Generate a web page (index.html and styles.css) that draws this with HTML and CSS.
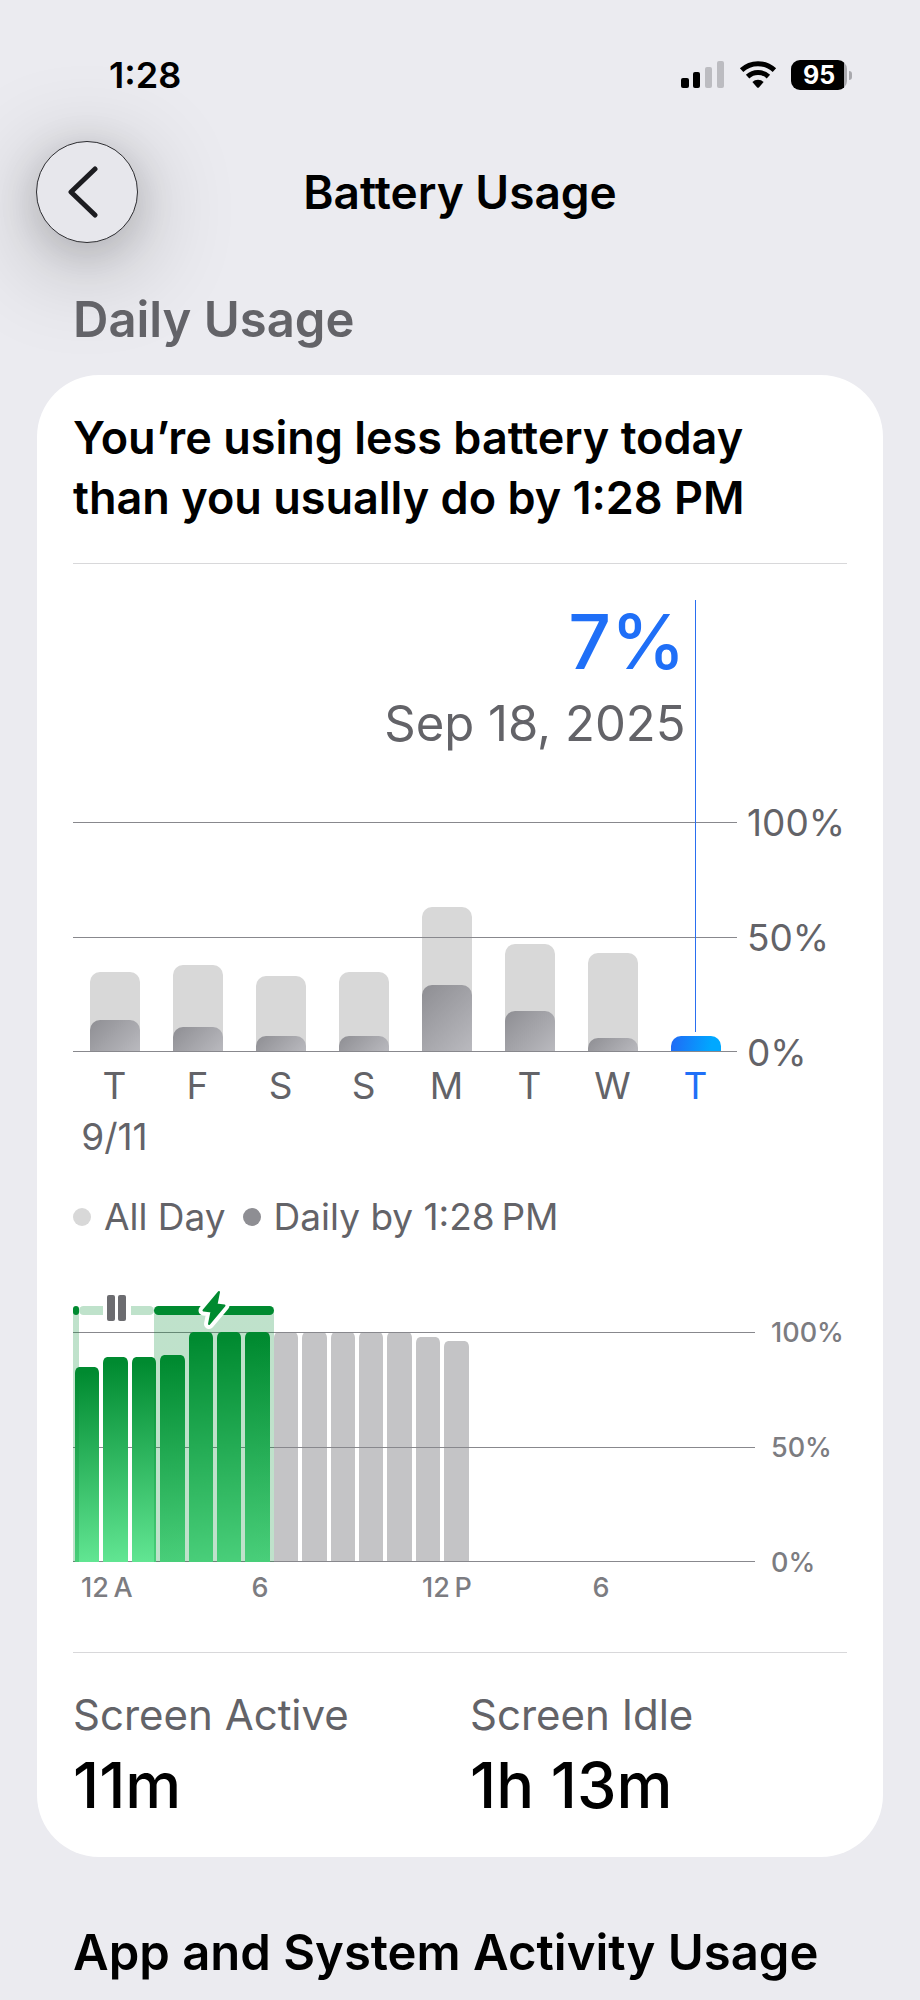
FILE: index.html
```html
<!DOCTYPE html>
<html lang="en">
<head>
  <meta charset="UTF-8">
  <meta name="viewport" content="width=device-width, initial-scale=1">
  <title>Battery Usage</title>
  <link rel="stylesheet" href="styles.css">
</head>
<body>
  <div class="status-bar">
    <span class="time">1:28</span>
    <div class="status-icons">
      <svg class="signal" width="44" height="28" viewBox="0 0 44 28">
        <rect x="0" y="17" width="8" height="10" rx="2"/>
        <rect x="12" y="11" width="7" height="16" rx="2"/>
        <rect x="24" y="6" width="7" height="21" rx="2" fill="#bcbcc1"/>
        <rect x="36" y="0" width="7" height="27" rx="2" fill="#bcbcc1"/>
      </svg>
      <svg class="wifi" width="38" height="28" viewBox="0 0 38 28">
        <path d="M2.6 9.2 A24 24 0 0 1 35.4 9.2" fill="none" stroke="#000" stroke-width="5"/>
        <path d="M8.6 15.6 A15.2 15.2 0 0 1 29.4 15.6" fill="none" stroke="#000" stroke-width="5"/>
        <path d="M13.4 21 A8 8 0 0 1 24.6 21 L19.9 26.4 Q19 27.3 18.1 26.4 Z"/>
      </svg>
      <div class="battery"><span class="battery-level">95</span><span class="battery-tip"></span></div>
    </div>
  </div>

  <header class="nav">
    <button class="back" type="button" aria-label="Back">
      <svg width="30" height="52" viewBox="0 0 30 52">
        <path d="M27 3 L3 26 L27 49" fill="none" stroke="#1c1c20" stroke-width="5" stroke-linecap="round" stroke-linejoin="round"/>
      </svg>
    </button>
    <h1>Battery Usage</h1>
  </header>

  <main>
    <h2 class="section-title muted">Daily Usage</h2>

    <section class="card">
      <p class="summary">You’re using less battery today<br>than you usually do by 1:28 PM</p>

      <!-- last 8 days -->
      <div class="chart daily">
        <div class="plot">
          <div class="bars">
            <div class="day"><div class="bar" style="height:35%"></div><div class="bar part" style="height:14%"></div></div>
            <div class="day"><div class="bar" style="height:38%"></div><div class="bar part" style="height:11%"></div></div>
            <div class="day"><div class="bar" style="height:33%"></div><div class="bar part" style="height:7%"></div></div>
            <div class="day"><div class="bar" style="height:35%"></div><div class="bar part" style="height:7%"></div></div>
            <div class="day"><div class="bar" style="height:63%"></div><div class="bar part" style="height:29%"></div></div>
            <div class="day"><div class="bar" style="height:47%"></div><div class="bar part" style="height:18%"></div></div>
            <div class="day"><div class="bar" style="height:43%"></div><div class="bar part" style="height:6%"></div></div>
            <div class="day"><div class="bar today" style="height:7%"></div></div>
          </div>
          <div class="lines"><i></i><i></i><i></i></div>
          <div class="callout">
            <div class="callout-value">7%</div>
            <div class="callout-date">Sep 18, 2025</div>
          </div>
        </div>
        <div class="axis"><span>100%</span><span>50%</span><span>0%</span></div>
        <div class="days">
          <span>T<br>9/11</span><span>F</span><span>S</span><span>S</span><span>M</span><span>T</span><span>W</span><span class="selected">T</span>
        </div>
      </div>

      <div class="legend">
        <span class="dot"></span><span>All Day</span>
        <span class="dot dark"></span><span>Daily by 1:28&#8201;PM</span>
      </div>

      <!-- battery level by hour -->
      <div class="chart hourly">
        <div class="plot">
          <div class="bars">
            <div class="hour charged" style="height:85%"></div>
            <div class="hour charged" style="height:89%"></div>
            <div class="hour charged" style="height:89%"></div>
            <div class="hour charged" style="height:90%"></div>
            <div class="hour charged" style="height:100%"></div>
            <div class="hour charged" style="height:100%"></div>
            <div class="hour charged" style="height:100%"></div>
            <div class="hour" style="height:100%"></div>
            <div class="hour" style="height:100%"></div>
            <div class="hour" style="height:100%"></div>
            <div class="hour" style="height:100%"></div>
            <div class="hour" style="height:100%"></div>
            <div class="hour" style="height:98%"></div>
            <div class="hour" style="height:96%"></div>
          </div>
          <div class="lines"><i></i><i></i><i></i></div>
          <div class="charging">
            <div class="zone on" style="width:0.9%"><div class="strip"></div></div>
            <div class="zone" style="width:11%">
              <div class="strip">
                <svg class="pause" width="28" height="32" viewBox="0 0 28 32">
                  <rect width="28" height="26" fill="#fff"/>
                  <rect x="4" y="0" width="8" height="26" rx="2" fill="#6c6c70"/>
                  <rect x="15" y="0" width="8" height="26" rx="2" fill="#6c6c70"/>
                </svg>
              </div>
            </div>
            <div class="zone on" style="width:17.6%">
              <div class="strip">
                <svg class="bolt" width="36" height="52" viewBox="0 0 36 52">
                  <path d="M23 7 L7.5 25.5 L15.5 26.5 L13 39 L28.5 20.5 L20.5 19.5 Z" fill="#fff" stroke="#fff" stroke-width="10" stroke-linejoin="round"/>
                  <path d="M23 7 L7.5 25.5 L15.5 26.5 L13 39 L28.5 20.5 L20.5 19.5 Z" fill="#008a30" stroke="#008a30" stroke-width="2" stroke-linejoin="round"/>
                </svg>
              </div>
            </div>
          </div>
        </div>
        <div class="axis"><span>100%</span><span>50%</span><span>0%</span></div>
        <div class="times"><span>12&#8201;A</span><span>6</span><span>12&#8201;P</span><span>6</span></div>
      </div>

      <dl class="totals">
        <div><dt>Screen Active</dt><dd>11m</dd></div>
        <div><dt>Screen Idle</dt><dd>1h 13m</dd></div>
      </dl>
    </section>

    <h2 class="section-title">App and System Activity Usage</h2>
  </main>
</body>
</html>
```

FILE: styles.css
```css
* {
  box-sizing: border-box;
}
body {
  margin: 0;
  background: #ebebf0;
  color: #000;
  font-family: Inter, sans-serif;
}
h1, h2, p, dl, dd {
  margin: 0;
}

.status-bar {
  display: flex;
  justify-content: space-between;
  align-items: center;
  padding: 51px 68px 0 109px;
  height: 99px;
}
.time {
  font-size: 36px;
  font-weight: 600;
}
.status-icons {
  display: flex;
  align-items: center;
  gap: 14px;
}
.battery {
  display: flex;
  align-items: center;
  gap: 2px;
}
.battery-level {
  width: 56px;
  height: 30px;
  border-radius: 9px;
  background: linear-gradient(to right, #000 95%, #a9a9ae 95%);
  color: #fff;
  font-size: 25px;
  font-weight: 700;
  line-height: 31px;
  text-align: center;
}
.battery-tip {
  width: 3px;
  height: 9px;
  border-radius: 0 4px 4px 0;
  background: #a9a9ae;
}

.nav {
  display: grid;
  grid-template-columns: 102px 1fr 102px;
  align-items: center;
  margin-top: 42px;
  padding: 0 36px;
}
.back {
  display: flex;
  align-items: center;
  justify-content: center;
  height: 102px;
  padding: 0 8px 0 0;
  border: 1px solid #2c2c30;
  border-radius: 50%;
  background: #e7e7ec;
  box-shadow: 0 18px 100px rgba(0, 0, 0, 0.3), 0 8px 40px rgba(0, 0, 0, 0.14);
}
.nav h1 {
  font-size: 46px;
  font-weight: 600;
  text-align: center;
}

.section-title {
  position: relative;
  margin: 66px 73px 0;
  font-size: 49px;
  font-weight: 600;
  line-height: 60px;
}
.muted {
  margin-top: 47px;
  color: #636368;
}

.card {
  position: relative;
  margin: 25px 37px 0;
  padding: 33px 36px 34px;
  border-radius: 62px;
  background: #fff;
}
.summary {
  padding-bottom: 35px;
  border-bottom: 1px solid #d8d8da;
  font-size: 45px;
  font-weight: 600;
  line-height: 60px;
}

/* charts: plot on the left, percent labels on the right, names below */
.chart {
  display: grid;
}
.daily {
  grid-template-columns: 1fr 110px;
  margin-top: 36px;
}
.hourly {
  grid-template-columns: 1fr 92px;
  margin-top: 64px;
}
.plot {
  display: grid;
}
.daily .plot {
  grid-template-rows: 222px 230px;
}
.hourly .plot {
  grid-template-rows: 26px 230px;
}
.bars {
  display: flex;
  grid-area: 2 / 1;
  align-items: flex-end;
}
.lines {
  z-index: 1;
  display: flex;
  flex-direction: column;
  justify-content: space-between;
  grid-area: 2 / 1;
}
.lines i {
  height: 1px;
  background: #88888d;
}
.axis {
  display: flex;
  flex-direction: column;
  justify-content: space-between;
  align-self: end;
  height: 276px;
  margin-bottom: -24px;
  padding-left: 10px;
  color: #636368;
  font-size: 37px;
  line-height: 46px;
}
.hourly .axis {
  padding-left: 16px;
  color: #7c7c81;
  font-size: 27px;
  font-weight: 500;
}

.day {
  display: grid;
  flex: 1;
  height: 100%;
  justify-content: center;
  grid-template-columns: 50px;
}
.bar {
  grid-area: 1 / 1;
  align-self: end;
  border-radius: 10px 10px 0 0;
  background: #d8d8d8;
}
.part {
  background: linear-gradient(135deg, #8e8e93, #bababf);
}
.today {
  background: linear-gradient(100deg, #1f6df6 5%, #00a8ff 80%);
}
.callout {
  z-index: 2;
  grid-area: 1 / 1 / 3 / 2;
  margin: 0 6.25% 20px 0;
  padding-right: 9px;
  border-right: 1px solid #2a6ff0;
  text-align: right;
}
.callout-value {
  color: #1f6ff7;
  font-size: 75px;
  font-weight: 500;
  line-height: 84px;
}
.callout-date {
  margin-top: 10px;
  color: #636368;
  font-size: 49px;
  line-height: 60px;
}
.days {
  display: flex;
  margin-top: 8px;
  color: #636368;
  font-size: 37px;
  line-height: 51px;
}
.days span {
  flex: 1;
  text-align: center;
}
.days .selected {
  color: #1f6ff7;
}

.legend {
  display: flex;
  align-items: center;
  gap: 13px;
  margin-top: 30px;
  color: #636368;
  font-size: 37px;
  line-height: 50px;
}
.dot {
  width: 18px;
  height: 18px;
  border-radius: 50%;
  background: #d8d8d8;
}
.dot.dark {
  margin-left: 4px;
  background: #8e8e93;
}

.hour {
  width: calc(100% / 24);
  border: solid transparent;
  border-width: 0 2px;
  border-radius: 6px 6px 0 0;
  background: #c4c4c6 padding-box;
}
.charged {
  z-index: 2;
  background: linear-gradient(175deg, #008a30 3%, #62e693) padding-box;
}
.charging {
  z-index: 3;
  display: flex;
  grid-area: 1 / 1 / 3 / 2;
}
.zone.on {
  background: linear-gradient(transparent 5px, rgba(0, 138, 48, 0.25) 5px);
}
.strip {
  position: relative;
  height: 9px;
  border-radius: 5px;
  background: #bfe2cb;
}
.on .strip {
  background: #008a30;
}
.pause, .bolt {
  position: absolute;
  top: 50%;
  left: 50%;
  transform: translate(-50%, -50%);
}
.times {
  display: grid;
  grid-template-columns: repeat(4, 1fr);
  margin-top: 6px;
  color: #7c7c81;
  font-size: 27px;
  font-weight: 500;
  line-height: 40px;
}
.times span {
  padding-left: 8px;
}

.totals {
  display: grid;
  grid-template-columns: 1fr 1fr;
  gap: 20px;
  margin-top: 44px;
  padding-top: 34px;
  border-top: 1px solid #d8d8da;
}
.totals dt {
  color: #636368;
  font-size: 42px;
  line-height: 56px;
}
.totals dd {
  margin-top: 4px;
  font-size: 63px;
  font-weight: 500;
  line-height: 76px;
}
```
